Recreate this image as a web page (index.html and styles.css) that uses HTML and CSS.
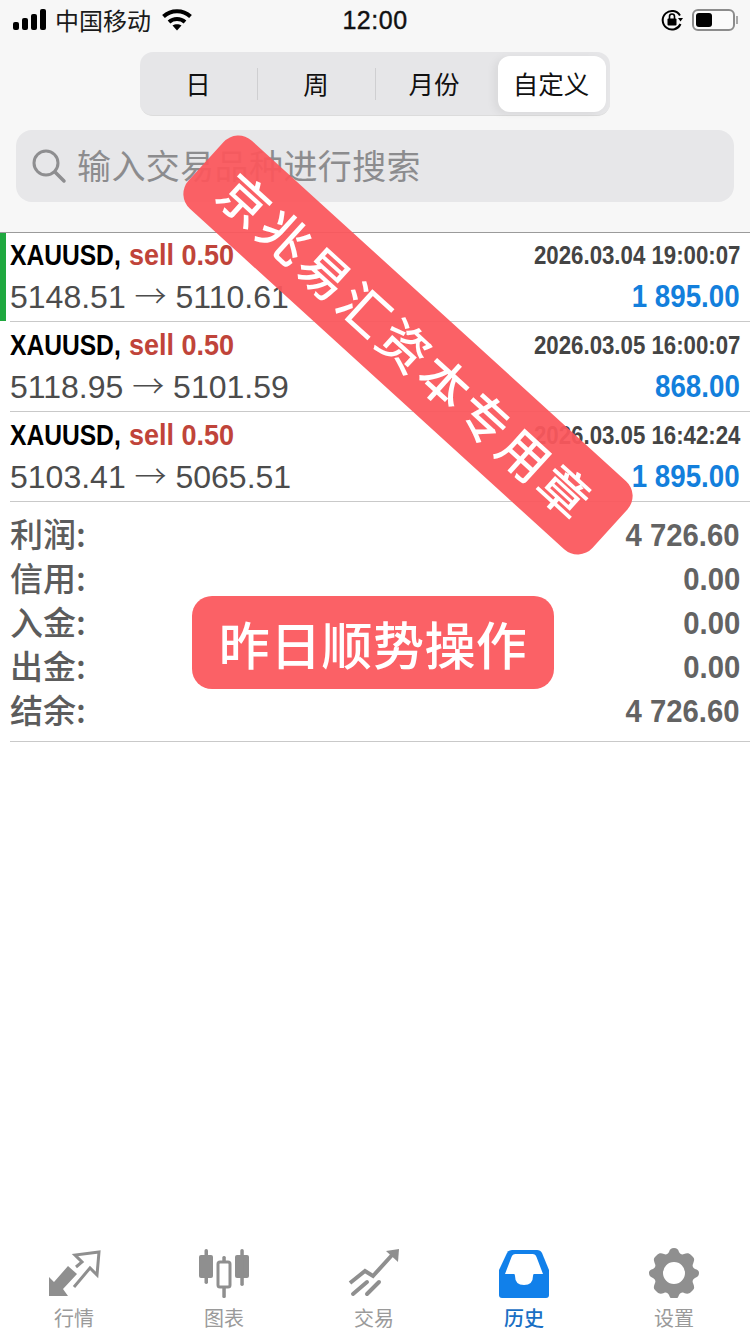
FILE: index.html
```html
<!DOCTYPE html>
<html lang="zh">
<head>
<meta charset="utf-8">
<title>历史</title>
<link rel="stylesheet" href="styles.css">
</head>
<body>
<div class="page">
  <header class="top">
    <div class="status">
      <div class="status-left">
        <svg class="signal" width="34" height="22" viewBox="0 0 34 22"><rect x="0" y="13" width="6" height="8" rx="2"/><rect x="9" y="9" width="6" height="12" rx="2"/><rect x="18" y="5" width="6" height="16" rx="2"/><rect x="27" y="0" width="6" height="21" rx="2"/></svg>
        <span class="carrier">中国移动</span>
        <svg class="wifi" width="30" height="24" viewBox="0 0 30 24"><path d="M1.5 8.5C9 1.5 21 1.5 28.5 8.500" fill="none" stroke="#000" stroke-width="4"/><path d="M7 14C11.500 10 18.500 10 23 14" fill="none" stroke="#000" stroke-width="4"/><path d="M10.500 17.500C13 15.700 17 15.700 19.500 17.500L15 22.500Z"/></svg>
      </div>
      <div class="clock">12:00</div>
      <div class="status-right">
        <svg width="24" height="24" viewBox="0 0 24 24"><path d="M20 7.500A9.300 9.300 0 1 0 20.500 16" fill="none" stroke="#000" stroke-width="2"/><path d="M18 10h5l-2.500 3.500Z"/><rect x="7.500" y="10.500" width="9" height="7" rx="1"/><path d="M9.500 11V8.500a2.500 2.500 0 0 1 5 0V11" fill="none" stroke="#000" stroke-width="1.600"/></svg>
        <div class="battery"><div class="battery-fill"></div></div>
        <div class="battery-cap"></div>
      </div>
    </div>
    <div class="segments">
      <div class="seg">日</div>
      <div class="seg seg-line">周</div>
      <div class="seg seg-line">月份</div>
      <div class="seg seg-active">自定义</div>
    </div>
    <div class="search">
      <svg width="38" height="38" viewBox="0 0 38 38"><circle cx="16" cy="16" r="12" fill="none" stroke="#8e8e90" stroke-width="3"/><path d="M25 25l9 9" stroke="#8e8e90" stroke-width="3.500" stroke-linecap="round"/></svg>
      <span>输入交易品种进行搜索</span>
    </div>
  </header>

  <main class="content">
    <div class="deals">
      <div class="deal deal-first">
        <div class="deal-col deal-left">
          <div class="deal-title"><b>XAUUSD,</b><em>sell 0.50</em></div>
          <div class="deal-price">5148.51 <i>→</i> 5110.61</div>
        </div>
        <div class="deal-col deal-right">
          <div class="deal-time">2026.03.04 19:00:07</div>
          <div class="deal-profit">1 895.00</div>
        </div>
      </div>
      <div class="deal">
        <div class="deal-col deal-left">
          <div class="deal-title"><b>XAUUSD,</b><em>sell 0.50</em></div>
          <div class="deal-price">5118.95 <i>→</i> 5101.59</div>
        </div>
        <div class="deal-col deal-right">
          <div class="deal-time">2026.03.05 16:00:07</div>
          <div class="deal-profit">868.00</div>
        </div>
      </div>
      <div class="deal">
        <div class="deal-col deal-left">
          <div class="deal-title"><b>XAUUSD,</b><em>sell 0.50</em></div>
          <div class="deal-price">5103.41 <i>→</i> 5065.51</div>
        </div>
        <div class="deal-col deal-right">
          <div class="deal-time">2026.03.05 16:42:24</div>
          <div class="deal-profit">1 895.00</div>
        </div>
      </div>
    </div>
    <div class="summary">
      <div class="sum-row"><span>利润:</span><b>4 726.60</b></div>
      <div class="sum-row"><span>信用:</span><b>0.00</b></div>
      <div class="sum-row"><span>入金:</span><b>0.00</b></div>
      <div class="sum-row"><span>出金:</span><b>0.00</b></div>
      <div class="sum-row"><span>结余:</span><b>4 726.60</b></div>
    </div>
  </main>

  <nav class="tabs">
    <div class="tab">
      <svg width="60" height="50" viewBox="0 0 60 50"><path class="ic-fill" d="M4 48V29l5 5 14-16 9 8-14 15 5 7Z"/><path d="M31 19l6-5-7-7 24-3-2 23-7-7-16 19" fill="none" stroke="#8f8f8f" stroke-width="3"/></svg>
      <span>行情</span>
    </div>
    <div class="tab">
      <svg width="60" height="50" viewBox="0 0 60 50"><rect class="ic-fill" x="4" y="7" width="14" height="23" rx="2"/><rect class="ic-fill" x="9.500" y="1" width="3.500" height="35" rx="1.700"/><rect x="23" y="14" width="12" height="25" rx="2" fill="none" stroke="#8f8f8f" stroke-width="3"/><rect class="ic-fill" x="27.300" y="8" width="3.500" height="6" rx="1.500"/><rect class="ic-fill" x="27.300" y="39" width="3.500" height="11" rx="1.500"/><rect class="ic-fill" x="40" y="7" width="14" height="23" rx="2"/><rect class="ic-fill" x="45.300" y="1" width="3.500" height="37" rx="1.700"/></svg>
      <span>图表</span>
    </div>
    <div class="tab">
      <svg width="60" height="50" viewBox="0 0 60 50"><path d="M5 35l15-12 8 5 20-22" fill="none" stroke="#8f8f8f" stroke-width="4"/><path class="ic-fill" d="M41 3l13-2-1 13Z"/><path d="M8 46l14-12M22 46l12-12" stroke="#8f8f8f" stroke-width="4" stroke-linecap="round"/></svg>
      <span>交易</span>
    </div>
    <div class="tab tab-active">
      <svg width="60" height="50" viewBox="0 0 60 50"><path d="M4 22L12 5q1.500-3 5-3h25q3.500 0 5 3L54 22V47q0 3-3 3H7q-3 0-3-3Z" fill="#1180ea"/><path d="M10 26L16.500 9q1-3 4-3h17q3 0 4 3L48 26H39q-1 0-1 2 0 9-9 9t-9-9q0-2-1-2Z" fill="#fff"/></svg>
      <span>历史</span>
    </div>
    <div class="tab">
      <svg width="60" height="50" viewBox="0 0 60 50"><path class="ic-fill" transform="translate(-1 0)" fill-rule="evenodd" d="M30 0c3 0 4 1 5 4 1 2 3 3 5 2 3-1 5-1 7 1l2 2c2 2 1 4 0 7-1 2 0 4 2 5 3 1 4 2 4 4s-1 4-4 5c-2 1-3 3-2 5 1 3 2 5 0 7l-2 2c-2 2-4 2-7 1-2-1-4 0-5 2-1 3-2 4-5 4s-4-1-5-4c-1-2-3-3-5-2-3 1-5 1-7-1l-2-2c-2-2-1-4 0-7 1-2 0-4-2-5-3-1-4-3-4-5s1-3 4-4c2-1 3-3 2-5-1-3-2-5 0-7l2-2c2-2 4-2 7-1 2 1 4 0 5-2 1-3 2-4 5-4Zm0 14a11 11 0 1 0 0 22 11 11 0 0 0 0-22Z"/></svg>
      <span>设置</span>
    </div>
  </nav>

  <div class="stamp stamp-diagonal">京兆易汇资本专用章</div>
  <div class="stamp stamp-flat">昨日顺势操作</div>
</div>
</body>
</html>
```
FILE: styles.css
```css
* { box-sizing: border-box; }
html, body { margin: 0; padding: 0; background: #fff; }
body { font-family: "Liberation Sans", "Noto Sans CJK SC", sans-serif; }
.page { position: relative; width: 750px; height: 1334px; overflow: hidden; display: flex; flex-direction: column; background: #fff; }

.top { height: 233px; margin-bottom: -1px; background: #f7f7f7; padding-top: 2px; flex: none; border-bottom: 1px solid #9b9b9b; }
.status { height: 36px; display: flex; align-items: center; justify-content: space-between; padding: 0 12px 0 13px; position: relative; }
.status-left { display: flex; align-items: center; gap: 5px; }
.carrier { font-size: 24px; color: #1a1a1a; font-family: "Noto Sans CJK SC", sans-serif; line-height: 30px; margin-left: 3px; }
.wifi { margin-left: 6px; }
.clock { position: absolute; left: 0; right: 0; text-align: center; font-size: 25px; letter-spacing: 0.5px; color: #111; font-family: "Liberation Sans", sans-serif; pointer-events: none; -webkit-text-stroke: 0.4px #111; }
.status-right { display: flex; align-items: center; }
.status-right svg { margin-right: 8px; }
.battery { width: 43px; height: 22px; border: 2px solid #8c8c8c; border-radius: 6px; padding: 2px; background: #fbfbfb; }
.battery-fill { width: 16px; height: 100%; background: #000; border-radius: 3px; }
.battery-cap { width: 2px; height: 8px; background: #a8a8a8; margin-left: 1px; }

.segments { width: 470px; height: 64px; margin: 14px auto 0 140px; background: #e6e6e8; border-radius: 13px; display: flex; align-items: center; padding: 4px 4px 3px 0; border-bottom: 1px solid #dcdcdc; }
.seg { height: 100%; display: flex; align-items: center; justify-content: center; font-size: 25.500px; color: #111; font-family: "Noto Sans CJK SC", sans-serif; width: 118px; position: relative; padding: 0 2px 3px 0; }
.seg-line::before { content: ""; position: absolute; left: -1px; top: 12px; bottom: 12px; width: 1px; background: #cfcfd1; }
.seg-active { width: 108px; margin-left: auto; background: #fff; border-radius: 12px; box-shadow: -4px 2px 8px rgba(0,0,0,.06); }

.search { height: 72px; margin: 14px 16px 0; background: #e7e7e9; border-radius: 16px; display: flex; align-items: center; padding: 0 0 0 14px; gap: 9px; font-size: 34px; letter-spacing: 0.400px; color: #8c8c8e; font-family: "Noto Sans CJK SC", sans-serif; }
.search span { margin-top: -3px; }

.content { flex: 1; }
.deal { height: 90px; display: flex; justify-content: space-between; padding: 0 10px; position: relative; }
.deal::after { content: ""; position: absolute; left: 10px; right: 0; bottom: 0; height: 1px; background: #c9c9c9; }
.deal-first::before { content: ""; position: absolute; left: 0; top: 1px; width: 6px; height: 88px; background: #1fa83f; }
.deal-left { padding-top: 1px; }
.deal-right { padding-top: 1px; text-align: right; display: flex; flex-direction: column; align-items: flex-end; }
.deal-title { height: 44px; display: flex; align-items: center; font-size: 30px; line-height: 44px; white-space: pre; font-weight: 700; }
.deal-title b { color: #000; transform: scaleX(.82); transform-origin: left center; margin-right: -16px; }
.deal-title em { font-style: normal; color: #c0443a; transform: scaleX(.9); transform-origin: left center; }
.deal-price { font-size: 32px; line-height: 34px; color: #4c4c4c; white-space: pre; }
.deal-price i { font-style: normal; font-family: "Noto Sans CJK SC", sans-serif; font-size: 32px; font-weight: 300; }
.deal-time { height: 44px; line-height: 44px; font-size: 26px; font-weight: 700; color: #444; transform: scaleX(.855); transform-origin: right center; white-space: nowrap; }
.deal-profit { font-size: 31px; line-height: 34px; margin-top: 3px; font-weight: 700; color: #137fdc; transform: scaleX(.895); transform-origin: right center; }

.summary { padding: 11px 10px 8px 0; margin-left: 10px; border-bottom: 1px solid #c9c9c9; height: 240px; }
.sum-row { display: flex; justify-content: space-between; height: 44px; line-height: 44px; font-size: 33px; color: #5c5c5c; }
.sum-row span { font-family: "Noto Sans CJK SC", sans-serif; font-weight: 500; margin-top: -2px; }
.sum-row b { font-size: 32px; color: #636363; transform: scaleX(.915); transform-origin: right center; }

.tabs { height: 90px; flex: none; display: flex; padding-top: 4px; }
.tab { width: 150px; display: flex; flex-direction: column; align-items: center; font-size: 20px; color: #9a9a9a; font-family: "Noto Sans CJK SC", sans-serif; }
.tab span { line-height: 26px; margin-top: 7px; margin-right: 2px; }
.tab-active span { color: #1a6fc4; font-weight: 500; }
.ic-fill { fill: #8f8f8f; }

.stamp { position: absolute; background: rgba(251,87,92,.94); color: #fff; font-family: "Noto Sans CJK SC", sans-serif; display: flex; align-items: center; justify-content: center; white-space: nowrap; }
.stamp-diagonal { left: 135px; top: 299px; width: 546px; height: 92px; border-radius: 20px; transform: rotate(42.300deg); font-size: 50px; letter-spacing: 4px; font-weight: 500; }
.stamp-flat { left: 192px; top: 596px; width: 362px; height: 93px; border-radius: 20px; font-size: 51px; letter-spacing: 0.400px; font-weight: 500; }
```
